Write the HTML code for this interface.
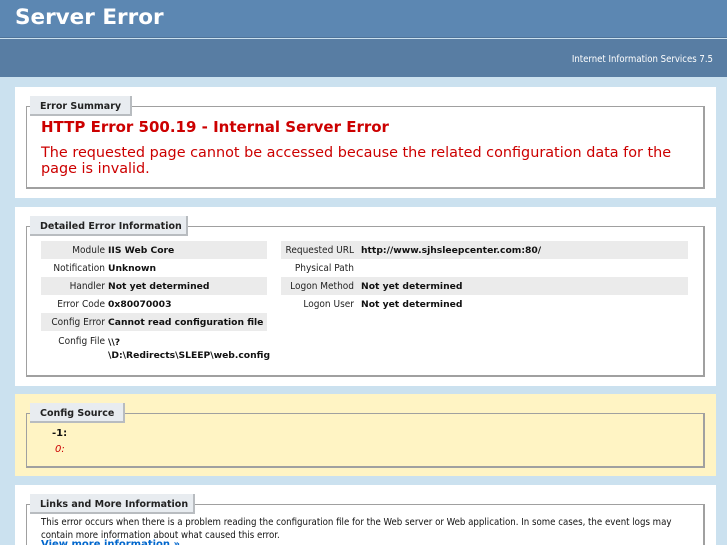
<!DOCTYPE html>
<html style="width:727px;height:545px;overflow:hidden"><head><meta charset="utf-8"><style>
*{margin:0;padding:0;box-sizing:border-box}
body{width:727px;height:545px;overflow:hidden;background:#cbe1ef;font-family:"DejaVu Sans","Liberation Sans",sans-serif;position:relative}
.a{position:absolute;white-space:nowrap}
.h1{left:0;top:0;width:727px;height:38px;background:#5c87b2;border-bottom:1px solid #4f749a}
.h2{left:0;top:39px;width:727px;height:38px;background:#587da3}
.panel{position:absolute;left:15px;width:701px;background:#fff;overflow:hidden}
.fs{position:absolute;left:11px;right:11px;border:2px solid #a0a0a0;border-top:1px solid #a0a0a0;border-left:1px solid #a0a0a0}
.lg{position:absolute;left:15px;height:20px;background:#e8ecf0;border-right:2px solid #b8bcc0;border-bottom:2px solid #b8bcc0;font-weight:bold;font-size:9.5px;color:#222;padding:5px 0 0 10px}
.lbl{font-family:"DejaVu Sans Condensed","DejaVu Sans",sans-serif;font-size:10px;color:#222;text-align:right}
.val{font-size:9.2px;font-weight:bold;color:#111}
.band{position:absolute;height:18px;background:#ebebeb}
</style></head><body>
<div class="a h1"></div>
<div class="a" style="left:15px;top:5px;font-size:21.5px;font-weight:bold;color:#fff">Server Error</div>
<div class="a h2"></div>
<div class="a" style="right:14px;top:54px;font-size:9.5px;color:#fff;font-family:'DejaVu Sans Condensed','DejaVu Sans',sans-serif">Internet Information Services 7.5</div>

<div class="panel" style="top:87px;height:111px">
 <div class="fs" style="top:19px;height:83px"></div>
 <div class="lg" style="top:9px;width:102px">Error Summary</div>
 <div class="a" style="left:26px;top:31px;font-size:15px;font-weight:bold;color:#cc0000">HTTP Error 500.19 - Internal Server Error</div>
 <div class="a" style="left:26px;top:58px;font-size:14.4px;color:#cc0000;line-height:16px">The requested page cannot be accessed because the related configuration data for the<br>page is invalid.</div>
</div>

<div class="panel" style="top:207px;height:179px">
 <div class="fs" style="top:19px;height:151px"></div>
 <div class="lg" style="top:9px;width:158px">Detailed Error Information</div>
</div>
<div class="band" style="left:41px;top:241px;width:226px"></div>
<div class="band" style="left:41px;top:277px;width:226px"></div>
<div class="band" style="left:41px;top:313px;width:226px"></div>
<div class="band" style="left:281px;top:241px;width:407px"></div>
<div class="band" style="left:281px;top:277px;width:407px"></div>
<div class="a lbl" style="left:40px;width:65px;top:245px">Module</div><div class="a val" style="left:108px;top:245px">IIS Web Core</div>
<div class="a lbl" style="left:40px;width:65px;top:263px">Notification</div><div class="a val" style="left:108px;top:263px">Unknown</div>
<div class="a lbl" style="left:40px;width:65px;top:281px">Handler</div><div class="a val" style="left:108px;top:281px">Not yet determined</div>
<div class="a lbl" style="left:40px;width:65px;top:299px">Error Code</div><div class="a val" style="left:108px;top:299px">0x80070003</div>
<div class="a lbl" style="left:40px;width:65px;top:317px">Config Error</div><div class="a val" style="left:108px;top:317px">Cannot read configuration file</div>
<div class="a lbl" style="left:40px;width:65px;top:336px">Config File</div><div class="a val" style="left:108px;top:336px;line-height:13px">\\?<br>\D:\Redirects\SLEEP\web.config</div>
<div class="a lbl" style="left:270px;width:84px;top:245px">Requested URL</div><div class="a val" style="left:361px;top:245px">http://www.sjhsleepcenter.com:80/</div>
<div class="a lbl" style="left:270px;width:84px;top:263px">Physical Path</div>
<div class="a lbl" style="left:270px;width:84px;top:281px">Logon Method</div><div class="a val" style="left:361px;top:281px">Not yet determined</div>
<div class="a lbl" style="left:270px;width:84px;top:299px">Logon User</div><div class="a val" style="left:361px;top:299px">Not yet determined</div>

<div class="panel" style="top:394px;height:82px;background:#fff4c4">
 <div class="fs" style="top:19px;height:55px"></div>
 <div class="lg" style="top:9px;width:95px">Config Source</div>
 <div class="a val" style="left:37px;top:34px;font-size:10px">-1:</div>
 <div class="a" style="left:40px;top:50px;font-size:10px;font-style:italic;color:#cc0000">0:</div>
</div>

<div class="panel" style="top:485px;height:60px">
 <div class="fs" style="top:19px;height:80px"></div>
 <div class="lg" style="top:9px;width:165px">Links and More Information</div>
 <div class="a" style="left:26px;top:31px;font-family:'DejaVu Sans Condensed','DejaVu Sans',sans-serif;font-size:9.6px;color:#111;line-height:13px">This error occurs when there is a problem reading the configuration file for the Web server or Web application. In some cases, the event logs may<br>contain more information about what caused this error.</div>
 <div class="a" style="left:26px;top:55px;font-size:10px;font-weight:bold;color:#0066cc;line-height:10px">View more information »</div>
</div>
</body></html>
